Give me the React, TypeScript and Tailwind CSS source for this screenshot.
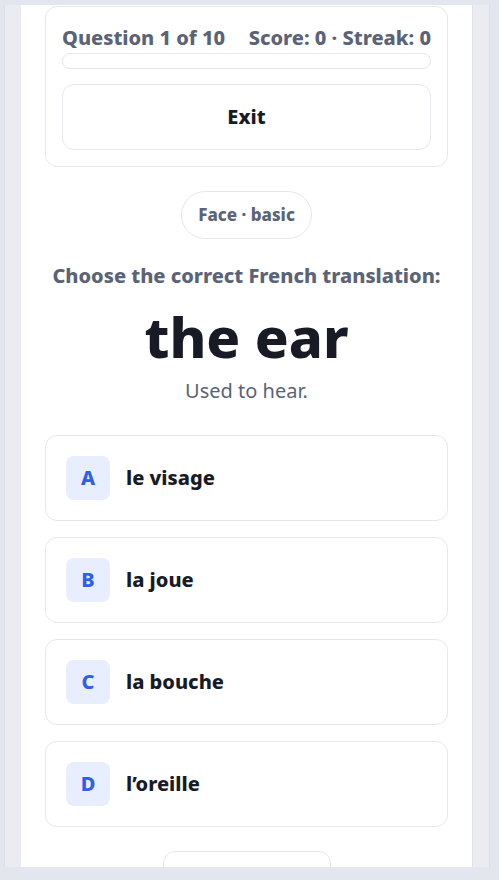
import { useState } from 'react';

const options = [
  { key: 'A', text: 'le visage' },
  { key: 'B', text: 'la joue' },
  { key: 'C', text: 'la bouche' },
  { key: 'D', text: 'l\u2019oreille' },
];

export default function App() {
  const [picked, setPicked] = useState<string | null>(null);

  return (
    <div className="h-[880px] overflow-hidden bg-[#e3e5ef] pt-[5px] pl-[4px] font-['Noto_Sans',sans-serif]">
      <div className="flex h-[862px] w-[486px] overflow-hidden border-x border-[#dcdee6] bg-[#ebecf1] px-4">
        <div className="flex-1 overflow-hidden border-r border-[#e0e2e8] bg-white px-6 pt-px">
          {/* Header card */}
          <div className="rounded-xl border border-[#e6e7eb] p-4">
            <div className="flex items-center justify-between text-[20px] leading-[30px] font-extrabold text-[#5b6376]">
              <span>Question 1 of 10</span>
              <span>Score: 0 · Streak: 0</span>
            </div>
            <div className="h-[16px] rounded-full border border-[#e6e7eb] bg-white" />
            <button className="mt-[15px] h-[66px] w-full rounded-xl border border-[#e6e7eb] bg-white text-[20px] font-extrabold text-[#181b25]">
              Exit
            </button>
          </div>

          <div className="mt-6 flex justify-center">
            <span className="flex h-[48px] items-center rounded-full border border-[#e6e7eb] px-4 text-[17px] font-extrabold text-[#5b6376]">
              Face · basic
            </span>
          </div>

          <p className="mt-[23px] text-center text-[20px] leading-7 font-extrabold text-[#5b6376]">
            Choose the correct French translation:
          </p>
          <h1 className="mt-[12px] text-center text-[56px] leading-[68px] font-extrabold text-[#181b25]">the ear</h1>
          <p className="mt-[7px] text-center text-[20px] leading-7 text-[#5b6376]">Used to hear.</p>

          <div className="mt-[30px] flex flex-col gap-4">
            {options.map((o) => (
              <button
                key={o.key}
                onClick={() => setPicked(o.key)}
                className={`flex items-center gap-4 rounded-xl border bg-white p-5 text-left ${
                  picked === o.key ? 'border-[#2f5fe8]' : 'border-[#e6e7eb]'
                }`}
              >
                <span className="flex h-11 w-11 items-center justify-center rounded-lg bg-[#e8eefd] text-[20px] font-extrabold text-[#2f5fe8]">
                  {o.key}
                </span>
                <span className="text-[20px] font-extrabold text-[#181b25]">{o.text}</span>
              </button>
            ))}
          </div>

          <div className="mt-6 flex justify-center">
            <button className="h-[48px] w-[168px] rounded-xl border border-[#e6e7eb] bg-white" />
          </div>
        </div>
      </div>
    </div>
  );
}
